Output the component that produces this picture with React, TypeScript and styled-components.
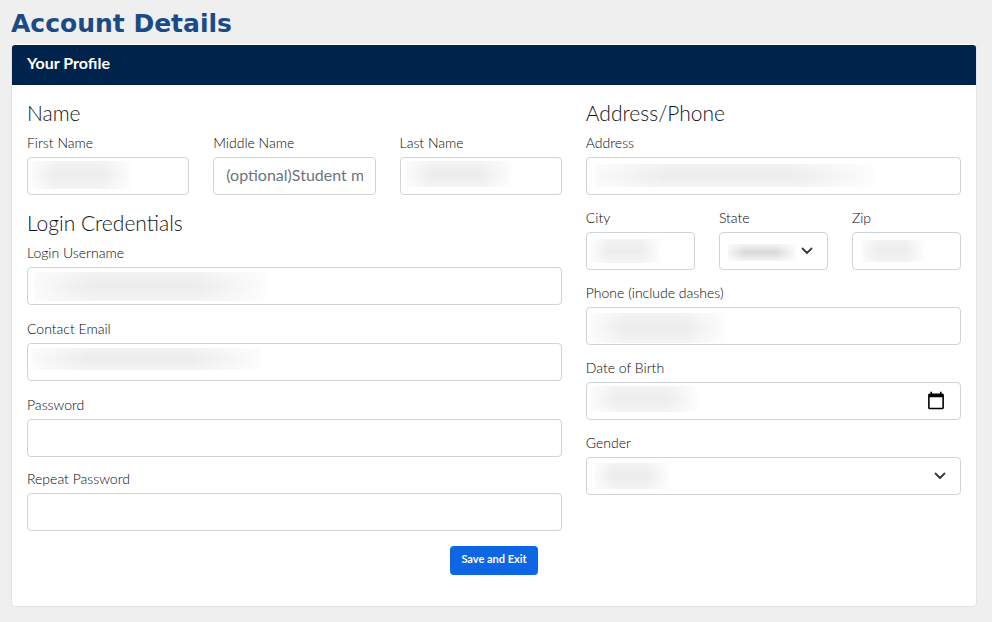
import React from "react";
import styled, { createGlobalStyle, css } from "styled-components";

const GlobalStyle = createGlobalStyle`
  *, *::before, *::after { box-sizing: border-box; }
  body {
    margin: 0;
    background: #efefef;
    color: #212529;
    font-family: Lato, "Liberation Sans", sans-serif;
    font-size: 16px;
    line-height: 24px;
  }
`;

const Page = styled.main`
  padding: 8px 15px 16px 11px;
`;

const PageTitle = styled.h1`
  margin: 0 0 4px;
  font-family: "DejaVu Sans", sans-serif;
  font-size: 25px;
  font-weight: 700;
  line-height: 32px;
  color: #1a4a87;
`;

const Card = styled.form`
  background: #fff;
  border: 1px solid #e4e4e4;
  border-top-color: #fff;
  border-radius: 4px;
`;

const CardHeader = styled.h2`
  margin: 0;
  padding: 6px 15px 10px;
  border-radius: 3px 3px 0 0;
  background: #00234b;
  color: #fff;
  font-size: 16px;
  font-weight: 700;
  line-height: 24px;
`;

const CardBody = styled.div`
  padding: 16px 15px 31px;
`;

const Columns = styled.div`
  display: grid;
  grid-template-columns: repeat(12, minmax(0, 1fr));
  column-gap: 24px;
`;

const Column = styled.div<{ $span: number }>`
  grid-column: span ${(p) => p.$span};
`;

const Section = styled.section`
  & + & {
    margin-top: 16px;
  }
`;

const SectionTitle = styled.h3`
  margin: 0 0 7px;
  color: #111417;
  font-size: 21px;
  font-weight: 300;
  line-height: 24px;
`;

const Stack = styled.div<{ $gap: number }>`
  display: flex;
  flex-direction: column;
  gap: ${(p) => p.$gap}px;
`;

const Thirds = styled.div`
  display: grid;
  grid-template-columns: repeat(3, minmax(0, 1fr));
  gap: 24px;
`;

const Label = styled.label`
  display: block;
  margin-bottom: 4px;
  color: #060708;
  font-size: 14px;
  font-weight: 300;
  line-height: 21px;
`;

const controlStyle = css`
  display: block;
  width: 100%;
  height: 38px;
  margin: 0;
  padding: 4px 12px 8px;
  border: 1px solid #ced4da;
  border-radius: 4px;
  background: #fff;
  color: #212529;
  font: inherit;
  appearance: none;

  &:focus {
    outline: 0;
    border-color: #86b7fe;
  }
`;

const Input = styled.input`
  ${controlStyle}

  &::placeholder {
    color: #6c757d;
    opacity: 1;
  }
  &[type="date"] {
    padding: 6px 12px;
  }
  &::-webkit-datetime-edit {
    opacity: 0;
  }
  &::-webkit-calendar-picker-indicator {
    width: 20px;
    height: 20px;
  }
`;

const Select = styled.select`
  ${controlStyle}
  padding-right: 36px;
`;

const Control = styled.div`
  position: relative;
`;

type MaskBox = { x: number; y: number; w: number; h: number; tone?: string };

const Mask = styled.span<{ $box: MaskBox }>`
  position: absolute;
  left: ${(p) => p.$box.x}px;
  top: ${(p) => p.$box.y}px;
  width: ${(p) => p.$box.w}px;
  height: ${(p) => p.$box.h}px;
  pointer-events: none;
  background:
    linear-gradient(
      90deg,
      rgba(255, 255, 255, 0.75),
      rgba(255, 255, 255, 0) 25%,
      rgba(255, 255, 255, 0) 70%,
      rgba(255, 255, 255, 0.85)
    ),
    linear-gradient(#f3f3f3, ${(p) => p.$box.tone ?? "#ececec"} 50%, #f4f4f4);
`;

const Chevron = styled.svg`
  position: absolute;
  top: 11px;
  right: 13px;
  width: 16px;
  height: 16px;
  pointer-events: none;
`;

const Actions = styled.div`
  display: flex;
  justify-content: center;
  margin-top: 15px;
`;

const SaveButton = styled.button`
  padding: 4px 11px 7px;
  border: 0;
  border-radius: 4px;
  background: #0d66e4;
  color: #fff;
  font-family: inherit;
  font-size: 11px;
  font-weight: 700;
  line-height: 18px;
  cursor: pointer;
`;

type FieldProps = {
  id: string;
  label: string;
  type?: string;
  placeholder?: string;
  mask?: MaskBox;
};

function Field({ id, label, type = "text", placeholder, mask }: FieldProps) {
  return (
    <div>
      <Label htmlFor={id}>{label}</Label>
      <Control>
        <Input id={id} name={id} type={type} placeholder={placeholder} />
        {mask && <Mask $box={mask} />}
      </Control>
    </div>
  );
}

function SelectField({ id, label, mask }: FieldProps) {
  return (
    <div>
      <Label htmlFor={id}>{label}</Label>
      <Control>
        <Select id={id} name={id}>
          <option value="" />
        </Select>
        {mask && <Mask $box={mask} />}
        <Chevron viewBox="0 0 16 16" aria-hidden="true">
          <path
            d="m3.5 5.5 4.5 4.5 4.5-4.5"
            fill="none"
            stroke="#343a40"
            strokeWidth="1.8"
            strokeLinecap="round"
            strokeLinejoin="round"
          />
        </Chevron>
      </Control>
    </div>
  );
}

export default function App() {
  return (
    <>
      <GlobalStyle />
      <Page>
        <PageTitle>Account Details</PageTitle>
        <Card onSubmit={(e) => e.preventDefault()}>
          <CardHeader>Your Profile</CardHeader>
          <CardBody>
            <Columns>
              <Column $span={7}>
                <Section>
                  <SectionTitle>Name</SectionTitle>
                  <Thirds>
                    <Field id="first-name" label="First Name" mask={{ x: 5, y: 4, w: 98, h: 28 }} />
                    <Field
                      id="middle-name"
                      label="Middle Name"
                      placeholder="(optional)Student middle name"
                    />
                    <Field id="last-name" label="Last Name" mask={{ x: 6, y: 4, w: 105, h: 26 }} />
                  </Thirds>
                </Section>
                <Section>
                  <SectionTitle>Login Credentials</SectionTitle>
                  <Stack $gap={13}>
                    <Field id="username" label="Login Username" mask={{ x: 7, y: 5, w: 232, h: 29 }} />
                    <Field id="email" label="Contact Email" type="email" mask={{ x: 4, y: 5, w: 229, h: 22 }} />
                    <Stack $gap={11}>
                      <Field id="password" label="Password" type="password" />
                      <Field id="repeat-password" label="Repeat Password" type="password" />
                    </Stack>
                  </Stack>
                </Section>
              </Column>
              <Column $span={5}>
                <Section>
                  <SectionTitle>Address/Phone</SectionTitle>
                  <Stack $gap={12}>
                    <Field id="address" label="Address" mask={{ x: 9, y: 7, w: 278, h: 23 }} />
                    <Thirds>
                      <Field id="city" label="City" mask={{ x: 6, y: 7, w: 68, h: 24 }} />
                      <SelectField id="state" label="State" mask={{ x: 9, y: 12, w: 68, h: 17, tone: "#d8d8d8" }} />
                      <Field id="zip" label="Zip" mask={{ x: 10, y: 8, w: 62, h: 22 }} />
                    </Thirds>
                    <Field
                      id="phone"
                      label="Phone (include dashes)"
                      type="tel"
                      mask={{ x: 6, y: 6, w: 132, h: 30 }}
                    />
                    <Field id="birth-date" label="Date of Birth" type="date" mask={{ x: 6, y: 4, w: 105, h: 26 }} />
                    <SelectField id="gender" label="Gender" mask={{ x: 9, y: 6, w: 74, h: 26 }} />
                  </Stack>
                </Section>
              </Column>
            </Columns>
            <Actions>
              <SaveButton type="submit">Save and Exit</SaveButton>
            </Actions>
          </CardBody>
        </Card>
      </Page>
    </>
  );
}
